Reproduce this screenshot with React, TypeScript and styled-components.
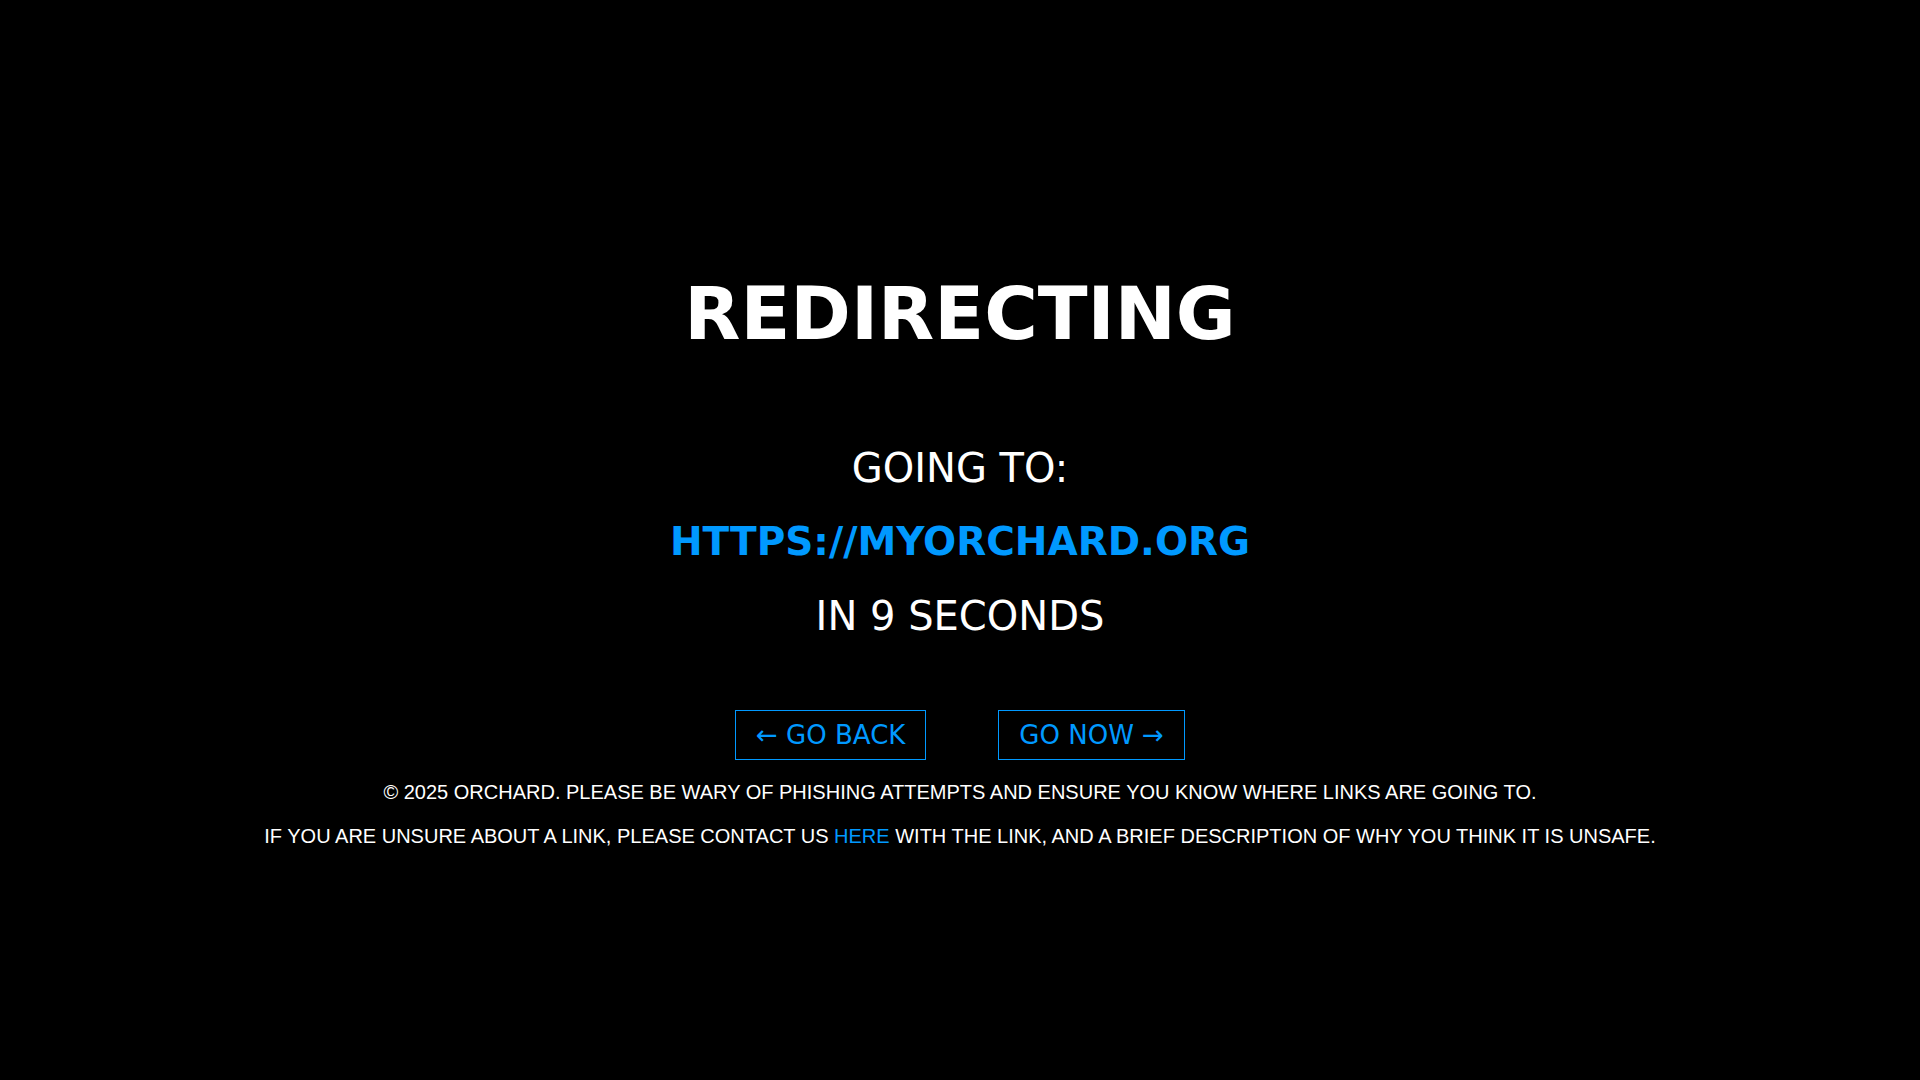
import React from "react";
import styled, { createGlobalStyle } from "styled-components";

const ACCENT = "#0099ff";
const DISPLAY = '"DejaVu Sans", sans-serif';

const GlobalStyle = createGlobalStyle`
  * { box-sizing: border-box; }
  body {
    margin: 0;
    background: #000;
    color: #fff;
    font-family: "Liberation Sans", Arial, sans-serif;
    text-transform: uppercase;
  }
`;

const Page = styled.div`
  min-height: 100vh;
  padding: 46px 16px 0;
  display: flex;
  flex-direction: column;
  align-items: center;
  justify-content: center;
  gap: 20px;
  text-align: center;
`;

const Main = styled.main`
  display: flex;
  flex-direction: column;
  align-items: center;
`;

const Title = styled.h1`
  margin: 0 0 94px;
  font: bold 73px/72px ${DISPLAY};
`;

const Destination = styled.section`
  display: flex;
  flex-direction: column;
  gap: 26px;
  margin-bottom: 70px;
`;

const Line = styled.p`
  margin: 0;
  font: 40px/48px ${DISPLAY};
`;

const Url = styled.h2`
  margin: 0;
  font: bold 39px/48px ${DISPLAY};
`;

const Link = styled.a`
  color: ${ACCENT};
  text-decoration: none;
`;

const Actions = styled.div`
  display: flex;
  flex-wrap: wrap;
  justify-content: center;
  gap: 72px;
`;

const Button = styled.button`
  padding: 8px 20px;
  border: 1px solid ${ACCENT};
  background: transparent;
  color: ${ACCENT};
  font: 26px/32px ${DISPLAY};
  text-transform: inherit;
  cursor: pointer;
`;

const Footer = styled.footer`
  display: flex;
  flex-direction: column;
  gap: 20px;
  font-size: 20px;
  line-height: 24px;
`;

const Note = styled.p`
  margin: 0;
`;

const target = "https://myorchard.org";

export default function App() {
  return (
    <>
      <GlobalStyle />
      <Page>
        <Main>
          <Title>Redirecting</Title>
          <Destination>
            <Line>Going to:</Line>
            <Url>
              <Link href={target}>{target}</Link>
            </Url>
            <Line>in 9 seconds</Line>
          </Destination>
          <Actions>
            <Button type="button">← Go back</Button>
            <Button type="button">Go now →</Button>
          </Actions>
        </Main>
        <Footer>
          <Note>
            © 2025 Orchard. Please be wary of phishing attempts and ensure you know where links are going to.
          </Note>
          <Note>
            If you are unsure about a link, please contact us <Link href="#contact">here</Link> with the link, and a
            brief description of why you think it is unsafe.
          </Note>
        </Footer>
      </Page>
    </>
  );
}
